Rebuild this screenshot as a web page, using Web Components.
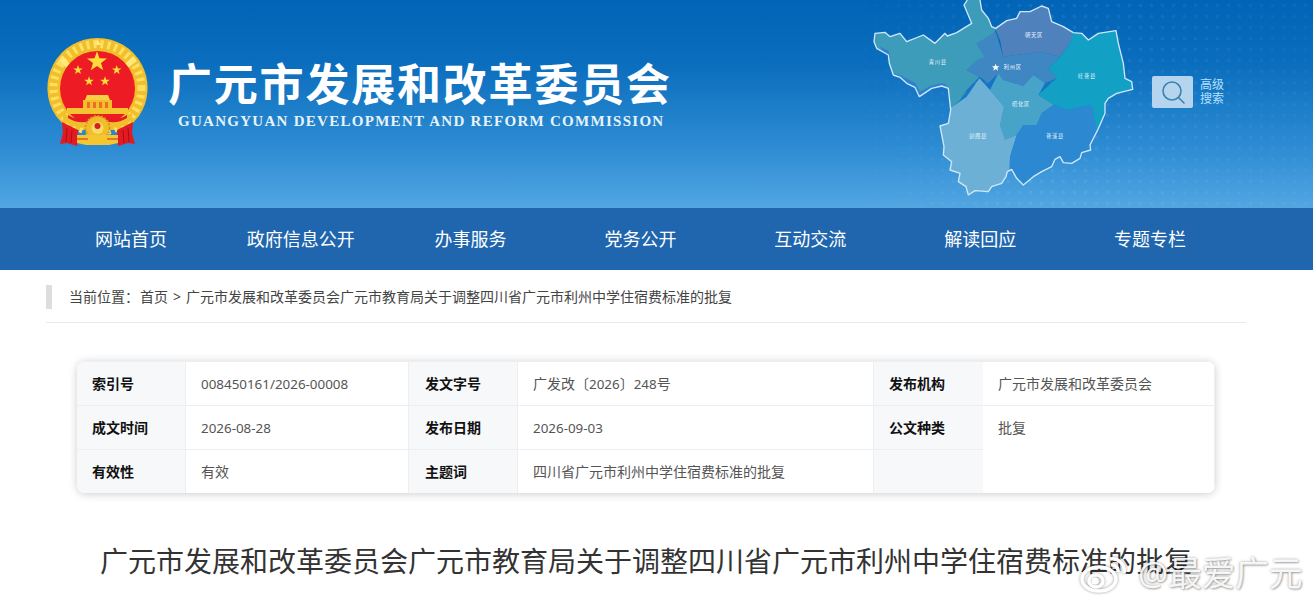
<!DOCTYPE html>
<html lang="zh">
<head>
<meta charset="utf-8">
<title>广元市发展和改革委员会</title>
<style>
  html, body { margin: 0; padding: 0; height: 604px; overflow: hidden; background: #fff; }
  body { font-family: "Noto Sans", "Noto Sans CJK SC", sans-serif; color: #333; position: relative; }
</style>
</head>
<body>
<site-header></site-header>
<site-nav></site-nav>
<bread-crumb></bread-crumb>
<info-table></info-table>
<article-title>广元市发展和改革委员会广元市教育局关于调整四川省广元市利州中学住宿费标准的批复</article-title>
<weibo-mark></weibo-mark>

<script>
const OUTLINE = "M360 0L365 30L385 55L395 80L407 85L440 62L470 55L480 35L510 35L545 18L565 25L575 65L610 80L640 98L665 100L685 120L715 100L768 92L775 130L790 190L795 235L815 245L818 268L770 280L745 295L735 310L735 340L722 370L712 392L690 435L692 450L665 458L660 475L635 490L610 488L600 470L585 478L575 500L545 515L520 530L490 555L470 535L455 508L442 515L438 530L425 550L395 560L385 575L345 572L325 585L318 560L295 545L300 520L270 510L275 485L250 465L252 440L240 378L265 370L272 330L265 265L245 258L215 265L178 290L165 262L140 250L120 232L100 225L88 190L85 165L50 145L42 125L45 100L75 97L90 110L120 100L140 125L190 105L225 130L255 100L262 108L290 98L335 70L312 15L322 0";

class SiteHeader extends HTMLElement {
  constructor() {
    super();
    this.shadowDOM = this.attachShadow({ mode: "open" });
  }

  connectedCallback() {
    this.render();
  }

  render() {
    const star = (x, y, r) => {
      let p = [];
      for (let i = 0; i < 10; i++) {
        const a = -Math.PI / 2 + i * Math.PI / 5;
        const d = i % 2 ? r * 0.4 : r;
        p.push((x + d * Math.cos(a)).toFixed(1) + "," + (y + d * Math.sin(a)).toFixed(1));
      }
      return `<polygon points="${p.join(" ")}" fill="#fbdc3c"/>`;
    };
    const labels = [["青川县", 206, 191], ["朝天区", 495, 111], ["利州区", 431, 208], ["旺苍县", 654, 234], ["昭化区", 456, 319], ["剑阁县", 327, 414], ["苍溪县", 558, 413]];
    this.shadowDOM.innerHTML = `
    <style>
      :host {
        display: block;
        height: 208px;
        background: linear-gradient(180deg, #0264b6 0%, #0a6dbd 30%, #2c8bd2 70%, #52a6e2 100%);
        position: relative;
      }
      .dots {
        position: absolute; left: 860px; top: 0; width: 453px; height: 208px;
        background: radial-gradient(circle, rgba(255,255,255,.07) 1.6px, transparent 2.2px) 0 0 / 11px 11px;
        -webkit-mask-image: linear-gradient(90deg, rgba(0,0,0,.2), #000 40%, rgba(0,0,0,.5));
      }
      .wrap { position: relative; height: 100%; display: flex; align-items: flex-start; padding-left: 47px; }
      .emblem { width: 101px; height: 110px; margin-top: 38px; flex: none; }
      .names { margin: 54px 0 0 20px; width: 510px; flex: none; color: #fff; }
      .cn {
        font: 700 44px/56px "Noto Sans CJK SC", sans-serif;
        letter-spacing: 1.8px;
        white-space: nowrap;
      }
      .en {
        font: bold 15px/18px "Liberation Serif", serif;
        letter-spacing: 1.28px;
        white-space: nowrap;
        margin: 2px 0 0 10px;
        color: #e6f3fc;
      }
      .map { width: 290px; height: 205px; flex: none; margin-left: 182px; }
      .search { display: flex; align-items: center; gap: 7px; margin: 76px 0 0 2px; flex: none; }
      .btn {
        width: 41px; height: 32px; border-radius: 2px; background: #b5d5ee;
        display: flex; align-items: center; justify-content: center;
      }
      .label { font-size: 12px; line-height: 14px; color: #b8e0fb; width: 26px; }
      text { font: 16px "Noto Sans CJK SC", sans-serif; letter-spacing: 2px; fill: #e8f4fb; }
    </style>
    <div class="dots"></div>
    <div class="wrap">
      <svg class="emblem" viewBox="0 0 101 110">
        <path d="M50.5 0A50 50 0 0 1 92 78L80 92H21L9 78A50 50 0 0 1 50.5 0Z" fill="#f1bf2c"/>
        <circle cx="50.5" cy="50" r="44" fill="none" stroke="#ffdf62" stroke-width="8" stroke-dasharray="3 4"/>
        <path d="M50.5 1L54 7H47Z M15 18L24 27L20 30L11 23Z M86 18L77 27L81 30L90 23Z" fill="#ffe778"/>
        <circle cx="50.5" cy="50.5" r="37.5" fill="#ed1c24"/>
        ${star(50, 23.7, 10.5)}
        ${star(31, 32, 5)}
        ${star(69.7, 32, 5)}
        ${star(42, 43.3, 5)}
        ${star(58, 43.3, 5)}
        <path d="M38 62L40 57H61L63 62Z" fill="#f7cf45"/>
        <path d="M36 62H65V70H36Z" fill="#f2bf2c"/>
        <path d="M40 64h3v6h-3z M46 64h3v6h-3z M52 64h3v6h-3z M58 64h3v6h-3z" fill="#ed1c24" opacity=".5"/>
        <path d="M20 70H81V76H20Z" fill="#f4c531"/>
        <path d="M16 74Q30 88 50.5 79Q71 88 85 74L85 82Q70 95 50.5 86Q31 95 16 82Z" fill="#f1bf2c"/>
        <path d="M21 77Q33 85 50.5 77Q68 85 80 77L80 80Q68 88 50.5 81Q33 88 21 80Z" fill="#e21d24"/>
        <path d="M15 84L31 92L30 108L20 105L13 106L16 95Z M86 84L70 92L71 108L81 105L88 106L85 95Z" fill="#e21a22"/>
        <path d="M20 90L19 104M25 92L24 105M81 90L82 104M76 92L77 105" stroke="#a80f16" stroke-width="1"/>
        <circle cx="50.5" cy="90" r="12" fill="#f2bd2c" stroke="#d49a18" stroke-width="2" stroke-dasharray="2 1.5"/>
        <circle cx="50.5" cy="90" r="6" fill="#f9dc62"/>
        <circle cx="50.5" cy="88" r="3" fill="#d8201f"/>
        <path d="M30 97H71L71 105L62 107H39L30 105Z" fill="#f4c62f"/>
        <path d="M30 101H41M60 101H71" stroke="#d8201f" stroke-width="1"/>
      </svg>
      <div class="names">
        <div class="cn">广元市发展和改革委员会</div>
        <div class="en">GUANGYUAN DEVELOPMENT AND REFORM COMMISSION</div>
      </div>
      <svg class="map" viewBox="0 0 870 615">
        <defs><clipPath id="shape"><path d="${OUTLINE}Z"/></clipPath></defs>
        <g clip-path="url(#shape)">
          <path d="M0 0H407V90L395 110L350 130L375 170L360 190L320 210L358 230L320 270L300 300L278 322L0 330Z" fill="#3d9cb9"/>
          <path d="M407 0H660L640 100L630 130L600 170L540 155L430 170L420 120L407 90Z" fill="#4f82bd"/>
          <path d="M407 95L430 170L540 155L600 170L565 205L590 235L555 250L520 225L490 258L430 240L415 220L385 250L358 230L320 210L350 180L375 170L350 130Z" fill="#3e87c3"/>
          <path d="M640 90L870 60V300L740 300L730 345L710 395L695 315L620 330L570 310L535 285L590 235L565 205L600 170L630 130Z" fill="#12a0c4"/>
          <path d="M415 220L430 240L490 258L520 225L555 250L535 285L580 315L545 340L530 375L490 375L470 405L435 420L420 375L432 320L390 270Z" fill="#47a4c8"/>
          <path d="M358 235L390 270L432 320L420 375L435 420L470 405L450 470L445 615H200V320H278L320 290Z" fill="#6db0d6"/>
          <path d="M580 315L620 330L695 315L710 395L760 400L700 615H445L450 470L470 405L490 375L530 375L545 340Z" fill="#2b88d1"/>
          <path d="M60 140L85 152L92 175L75 165Z M100 218L125 228L165 248L180 275L210 258L245 250L262 255L245 266L215 272L178 296L160 268L135 255L112 238Z" fill="#2f80cf"/>
        </g>
        <path d="${OUTLINE}" fill="none" stroke="#cfe8f7" stroke-width="4" stroke-linejoin="round"/>
        <polygon points="407,191 410,199 418,199 412,204 414,212 407,207 400,212 402,204 396,199 404,199" fill="#fff"/>
        ${labels.map(([name, x, y]) => `<text x="${x}" y="${y}">${name}</text>`).join("")}
      </svg>
      <div class="search">
        <div class="btn">
          <svg width="26" height="26" viewBox="0 0 26 26" fill="none" stroke="#3b81b1" stroke-width="1.6" stroke-linecap="round">
            <circle cx="12" cy="12" r="9"/>
            <path d="M18.5 18.5L24 24"/>
          </svg>
        </div>
        <div class="label">高级<br>搜索</div>
      </div>
    </div>
    `;
  }
}

class SiteNav extends HTMLElement {
  constructor() {
    super();
    this.shadowDOM = this.attachShadow({ mode: "open" });
    this.items = ["网站首页", "政府信息公开", "办事服务", "党务公开", "互动交流", "解读回应", "专题专栏"];
  }

  connectedCallback() {
    this.shadowDOM.innerHTML = `
    <style>
      :host { display: block; height: 62px; background: #1f66ae; }
      nav { display: flex; padding-left: 46px; }
      a {
        width: 169.85px; line-height: 62px; text-align: center; flex: none;
        color: #fff; font-size: 18px; text-decoration: none;
      }
    </style>
    <nav>${this.items.map((item) => `<a href="#">${item}</a>`).join("")}</nav>
    `;
  }
}

class BreadCrumb extends HTMLElement {
  constructor() {
    super();
    this.attachShadow({ mode: "open" }).innerHTML = `
    <style>
      :host {
        display: block; margin: 0 67px 0 46px; height: 52px;
        border-bottom: 1px solid #e8e8e8;
      }
      div {
        margin-top: 15px; float: left; height: 24px; line-height: 24px;
        border-left: 6px solid #ddd; padding-left: 17px;
        font-size: 14px; color: #444; white-space: nowrap;
      }
      a { color: inherit; text-decoration: none; margin-left: 1px; }
      i { font-style: normal; margin: 0 5px; }
    </style>
    <div>当前位置：<a href="#">首页</a><i>&gt;</i>广元市发展和改革委员会广元市教育局关于调整四川省广元市利州中学住宿费标准的批复</div>
    `;
  }
}

class InfoTable extends HTMLElement {
  constructor() {
    super();
    this.shadowDOM = this.attachShadow({ mode: "open" });
    this.rows = [
      ["索引号", "008450161/2026-00008", "发文字号", "广发改〔2026〕248号", "发布机构", "广元市发展和改革委员会"],
      ["成文时间", "2026-08-28", "发布日期", "2026-09-03", "公文种类", "批复"],
      ["有效性", "有效", "主题词", "四川省广元市利州中学住宿费标准的批复", "", ""],
    ];
  }

  connectedCallback() {
    const cells = this.rows.map((row) => row.map((text, i) =>
      `<div class="${i % 2 ? "val" : "key"}">${text.replace(/[0-9\/-]+/g, "<span>$&</span>")}</div>`).join("")).join("");
    this.shadowDOM.innerHTML = `
    <style>
      :host {
        display: grid; margin: 38px 98px 0 77px; border-radius: 8px; overflow: hidden;
        border-top: 1px solid #eceef1;
        box-shadow: 0 1px 8px rgba(0,0,0,.2);
        grid-template-columns: 109px 223px 109px 356px 109px 232px;
        grid-template-rows: 44px 44px 43px; font-size: 14px;
      }
      div {
        padding-left: 15px; line-height: 44px; border-bottom: 1px solid #eceef1;
        border-right: 1px solid #eceef1; box-sizing: border-box; white-space: nowrap;
      }
      .key { background: #f7f8fa; font-weight: 700; color: #111; }
      .val { color: #555; background: #fff; }
      div:nth-child(6n+4) { padding-left: 16px; }
      span { font-size: 13.4px; }
      div:nth-child(n+13) { border-bottom: 0; }
      div:nth-child(6n) { border-right: 0; }
    </style>
    ${cells}
    `;
  }
}

class ArticleTitle extends HTMLElement {
  constructor() {
    super();
    this.attachShadow({ mode: "open" }).innerHTML = `
    <style>
      :host {
        display: block; margin-top: 46px; padding-right: 21px; text-align: center;
        font-size: 28px; line-height: 44px; color: #333; white-space: nowrap;
      }
    </style>
    <slot></slot>
    `;
  }
}

class WeiboMark extends HTMLElement {
  constructor() {
    super();
    this.attachShadow({ mode: "open" }).innerHTML = `
    <style>
      :host {
        position: absolute; left: 1080px; top: 553px; display: flex; align-items: center; gap: 8px;
        color: rgba(255,255,255,.92); font-size: 33.6px; line-height: 40px; white-space: nowrap;
        text-shadow: 0 0 3px rgba(0,0,0,.35), 1px 1px 2px rgba(0,0,0,.25);
      }
      svg { flex: none; filter: drop-shadow(0 0 1.5px rgba(0,0,0,.4)); }
    </style>
    <svg width="50" height="40" viewBox="0 0 50 40" fill="none" stroke="#fff" stroke-width="3.5">
      <ellipse cx="19" cy="26" rx="17" ry="12"/>
      <ellipse cx="16" cy="28" rx="7" ry="6"/>
      <circle cx="15" cy="28" r="2" fill="#fff"/>
      <path d="M30 6A12 12 0 0 1 44 20M31 12A6 6 0 0 1 38 19"/>
    </svg>
    <span>@最爱广元</span>
    `;
  }
}

customElements.define("site-header", SiteHeader);
customElements.define("site-nav", SiteNav);
customElements.define("bread-crumb", BreadCrumb);
customElements.define("info-table", InfoTable);
customElements.define("article-title", ArticleTitle);
customElements.define("weibo-mark", WeiboMark);
</script>
</body>
</html>
